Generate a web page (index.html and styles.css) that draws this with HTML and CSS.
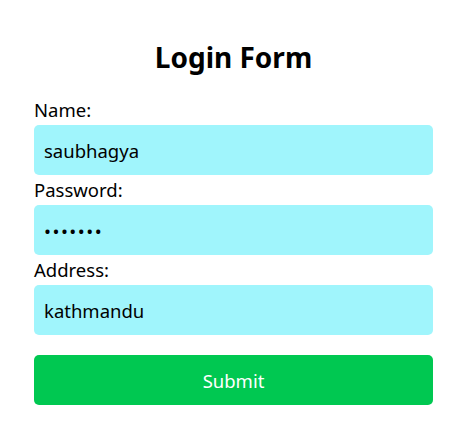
FILE: index.html
```html
<!DOCTYPE html>
<html>
<head>
<meta charset="utf-8">
<link rel="stylesheet" href="styles.css">
</head>
<body>
<div class="page">
  <form class="login-form">
    <h1 class="title">Login Form</h1>
    <label class="label" for="name">Name:</label>
    <input class="field" id="name" type="text" value="saubhagya">
    <label class="label" for="password">Password:</label>
    <input class="field field-secret" id="password" type="password" value="1234567">
    <label class="label" for="address">Address:</label>
    <input class="field" id="address" type="text" value="kathmandu">
    <button class="submit" type="button">Submit</button>
  </form>
</div>
</body>
</html>
```
FILE: styles.css
```css
html, body {
  margin: 0;
  padding: 0;
  background: #ffffff;
}
.page {
  padding: 38px 28px 0 34px;
  font-family: "Noto Sans", "Open Sans", sans-serif;
  color: #000000;
}
.login-form {
  display: flex;
  flex-direction: column;
}
.title {
  margin: 0 0 19px;
  font-size: 28px;
  line-height: 38px;
  font-weight: 700;
  text-align: center;
}
.label {
  display: block;
  font-size: 18.5px;
  line-height: 30px;
}
.field {
  box-sizing: border-box;
  height: 50px;
  width: 100%;
  border: none;
  border-radius: 5px;
  background: #a0f5fc;
  padding: 0 10px;
  font-family: inherit;
  font-size: 18.5px;
  color: #000000;
  outline: none;
}
.field-secret {
  letter-spacing: 1.5px;
}
.submit {
  margin-top: 20px;
  height: 50px;
  width: 100%;
  border: none;
  border-radius: 5px;
  background: #00c851;
  color: #ffffff;
  font-family: inherit;
  font-size: 18.5px;
}
```
